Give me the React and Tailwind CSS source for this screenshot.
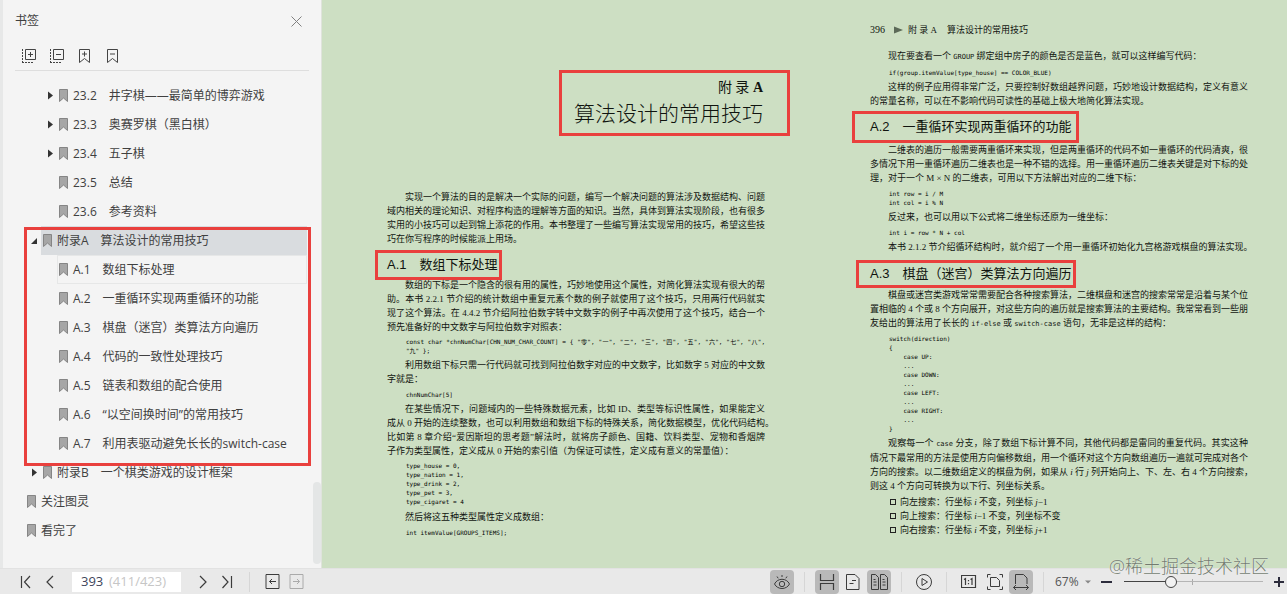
import React, { useState } from 'react';
import clsx from 'clsx';

const bookmarks = [
  { title: '23.2　井字棋——最简单的博弈游戏', depth: 2, arrow: 'closed' },
  { title: '23.3　奥赛罗棋（黑白棋）', depth: 2, arrow: 'closed' },
  { title: '23.4　五子棋', depth: 2, arrow: 'closed' },
  { title: '23.5　总结', depth: 2 },
  { title: '23.6　参考资料', depth: 2 },
  {
    title: '附录A　算法设计的常用技巧',
    depth: 1,
    arrow: 'open',
    marked: true,
    children: [
      { title: 'A.1　数组下标处理', depth: 2 },
      { title: 'A.2　一重循环实现两重循环的功能', depth: 2 },
      { title: 'A.3　棋盘（迷宫）类算法方向遍历', depth: 2 },
      { title: 'A.4　代码的一致性处理技巧', depth: 2 },
      { title: 'A.5　链表和数组的配合使用', depth: 2 },
      { title: 'A.6　“以空间换时间”的常用技巧', depth: 2 },
      { title: 'A.7　利用表驱动避免长长的switch-case', depth: 2 },
    ],
  },
  { title: '附录B　一个棋类游戏的设计框架', depth: 1, arrow: 'closed' },
  { title: '关注图灵', depth: 0 },
  { title: '看完了', depth: 0 },
];

const indents = ['pl-[10px]', 'pl-[26px]', 'pl-[42px]'];

/* ---------- icons ---------- */

const Icon = ({ w = 16, h = 16, children, className }) => (
  <svg
    width={w}
    height={h}
    viewBox={`0 0 ${w} ${h}`}
    fill="none"
    stroke="currentColor"
    className={clsx('shrink-0', className)}
    aria-hidden="true"
  >
    {children}
  </svg>
);

const BookmarkIcon = () => (
  <Icon w={9} h={13}>
    <path d="M.5 .5h8v12l-4-3.5-4 3.5z" fill="#a6a6a6" stroke="#858585" />
  </Icon>
);

const TreeArrow = ({ state }) => {
  if (!state) return <span className="w-3 shrink-0" />;
  return (
    <button type="button" aria-label="展开" className="flex w-3 shrink-0 items-center pl-px text-[#333]">
      <Icon w={8} h={9}>
        {state === 'open' ? (
          <path d="M7 2v6H1z" fill="currentColor" stroke="none" />
        ) : (
          <path d="M2 0.5l5 4-5 4z" fill="currentColor" stroke="none" />
        )}
      </Icon>
    </button>
  );
};

const ExpandAllIcon = ({ minus }) => (
  <Icon>
    <path d="M4.500 1.500h10v10h-10z" strokeLinejoin="round" />
    <path d="M7 6.500h5" />
    {!minus && <path d="M9.500 4v5" />}
    <path d="M1.500 1v13M1 14.500h11" strokeDasharray="2 1" />
  </Icon>
);

const BookmarkEditIcon = ({ minus }) => (
  <Icon>
    <path d="M2.500 1.500h10v13l-5-4-5 4z" strokeLinejoin="round" />
    <path d="M5 6h5" />
    {!minus && <path d="M7.500 3.500v5" />}
  </Icon>
);

/* ---------- sidebar ---------- */

const BookmarkRow = ({ item, selected, hovered, onSelect }) => (
  <div className={clsx('flex h-[29px] items-stretch', indents[item.depth])}>
    <TreeArrow state={item.arrow} />
    <button
      type="button"
      onClick={() => onSelect(item.title)}
      className={clsx(
        'mr-[14px] flex flex-1 items-center gap-[5px] border pl-px text-left whitespace-nowrap',
        selected ? 'border-transparent bg-[#d9dcdf]' : hovered ? 'border-[#e6e7e7]' : 'border-transparent'
      )}
    >
      <BookmarkIcon />
      {item.title}
    </button>
  </div>
);

const Sidebar = () => {
  const [selected, setSelected] = useState('附录A　算法设计的常用技巧');

  return (
    <aside className="relative w-[322px] shrink-0 border-r border-l-[3px] border-r-[#dfe3dc] border-l-[#e7e8e8] bg-[#f4f4f4] text-[#404040]">
      <header className="flex h-[42px] items-center justify-between pr-[19px] pl-3">
        <h2 className="text-xs">书签</h2>
        <button type="button" aria-label="关闭" className="text-[#808080]">
          <Icon w={11} h={11}>
            <path d="M.5 .5l10 10M10.500 .5l-10 10" />
          </Icon>
        </button>
      </header>
      <div className="mr-3 ml-3 flex h-[29px] items-center gap-3 border-b border-[#dedede] pl-[6px] text-[#444]">
        <button type="button" aria-label="全部展开"><ExpandAllIcon /></button>
        <button type="button" aria-label="全部折叠"><ExpandAllIcon minus /></button>
        <button type="button" aria-label="添加书签"><BookmarkEditIcon /></button>
        <button type="button" aria-label="删除书签"><BookmarkEditIcon minus /></button>
      </div>
      <ul className="pt-[10px] text-xs">
        {bookmarks.map(item => (
          <li key={item.title} className="relative">
            <BookmarkRow item={item} selected={selected === item.title} onSelect={setSelected} />
            {item.children && (
              <ul>
                {item.children.map((child, i) => (
                  <li key={child.title}>
                    <BookmarkRow
                      item={child}
                      selected={selected === child.title}
                      hovered={i === 0}
                      onSelect={setSelected}
                    />
                  </li>
                ))}
              </ul>
            )}
            {item.marked && (
              <div className="pointer-events-none absolute top-px right-[10px] -bottom-2 left-[21px] z-10 border-3 border-[#e9403d]" />
            )}
          </li>
        ))}
      </ul>
      <div className="absolute right-0 bottom-1 h-[82px] w-2 rounded-full bg-[#e4e6e6]" />
    </aside>
  );
};

/* ---------- document ---------- */

// Every line but the last fills the whole measure
const Para = ({ lines, full, className }) => (
  <p className={clsx('text-[9px] leading-[14px]', className)}>
    {lines.map((line, i) => (
      <span
        key={i}
        className={clsx(
          'block whitespace-nowrap',
          i === 0 && 'pl-[18px]',
          (full || i < lines.length - 1) && 'text-justify [text-align-last:justify]'
        )}
      >
        {line}
      </span>
    ))}
  </p>
);

const Code = ({ children, className }) => (
  <pre
    className={clsx(
      "pl-[19px] font-['DejaVu_Sans_Mono','Noto_Sans_CJK_SC',monospace] text-[6px] leading-[9px] text-black",
      className
    )}
  >
    {children}
  </pre>
);

const Mono = ({ children }) => (
  <span className="font-['DejaVu_Sans_Mono',monospace] text-[7px]">{children}</span>
);

const SectionTitle = ({ children, className }) => (
  <h3
    className={clsx(
      "flex items-center border-3 border-[#e9403d] font-['Liberation_Sans','Noto_Sans_CJK_SC',sans-serif] text-[13px] leading-5 whitespace-nowrap",
      className
    )}
  >
    {children}
  </h3>
);

const LeftPage = () => (
  <article className="flex min-w-0 flex-1 flex-col pt-[70px]">
    <header className="-mr-[25px] flex h-[66px] w-[231px] flex-col items-end self-end border-3 border-[#e9403d] pt-[5px] pr-6">
      <p className="text-sm leading-5">附 录 <b>A</b></p>
      <h1 className="text-[21px] leading-8 font-light whitespace-nowrap">算法设计的常用技巧</h1>
    </header>
    <Para
      className="mt-[54px]"
      lines={[
        '实现一个算法的目的是解决一个实际的问题，编写一个解决问题的算法涉及数据结构、问题',
        '域内相关的理论知识、对程序构造的理解等方面的知识。当然，具体到算法实现阶段，也有很多',
        '实用的小技巧可以起到锦上添花的作用。本书整理了一些编写算法实现常用的技巧，希望这些技',
        '巧在你写程序的时候能派上用场。',
      ]}
    />
    <SectionTitle className="mt-1 -ml-3 h-[30px] self-start pr-px pl-[9px]">A.1　数组下标处理</SectionTitle>
    <Para
      className="-mt-0.5"
      lines={[
        '数组的下标是一个隐含的很有用的属性，巧妙地使用这个属性，对简化算法实现有很大的帮',
        '助。本书 2.2.1 节介绍的统计数组中重复元素个数的例子就使用了这个技巧，只用两行代码就实',
        '现了这个算法。在 4.4.2 节介绍阿拉伯数字转中文数字的例子中再次使用了这个技巧，结合一个',
        '预先准备好的中文数字与阿拉伯数字对照表：',
      ]}
    />
    <Code className="mt-[3px]">
      <span className="block text-justify whitespace-nowrap [text-align-last:justify]">
        {'const char *chnNumChar[CHN_NUM_CHAR_COUNT] = { "零", "一", "二", "三", "四", "五", "六", "七", "八",'}
      </span>
      {'"九" };'}
    </Code>
    <Para
      className="mt-[3px]"
      lines={[
        '利用数组下标只需一行代码就可找到阿拉伯数字对应的中文数字，比如数字 5 对应的中文数',
        '字就是：',
      ]}
    />
    <Code className="mt-1">chnNumChar[5]</Code>
    <Para
      className="mt-[3px]"
      lines={[
        '在某些情况下，问题域内的一些特殊数据元素，比如 ID、类型等标识性属性，如果能定义',
        '成从 0 开始的连续整数，也可以利用数组和数组下标的特殊关系，简化数据模型，优化代码结构。',
        '比如第 8 章介绍“爱因斯坦的思考题”解法时，就将房子颜色、国籍、饮料类型、宠物和香烟牌',
        '子作为类型属性，定义成从 0 开始的索引值（为保证可读性，定义成有意义的常量值）：',
      ]}
    />
    <Code className="mt-[3px]">
      {`type_house = 0,
type_nation = 1,
type_drink = 2,
type_pet = 3,
type_cigaret = 4`}
    </Code>
    <Para className="mt-1" lines={['然后将这五种类型属性定义成数组：']} />
    <Code className="mt-1">int itemValue[GROUPS_ITEMS];</Code>
  </article>
);

const SearchItem = ({ children }) => (
  <li className="flex items-center gap-1">
    <span className="size-[6px] border border-[#222]" />
    <span>{children}</span>
  </li>
);

const RightPage = () => (
  <article className="flex min-w-0 flex-1 flex-col pt-[23px]">
    <header className="flex h-[14px] items-center text-[9px] leading-[14px]">
      <span className="text-[10px]">396</span>
      <Icon w={9} h={8} className="mr-[5px] ml-[9px]">
        <path d="M0 .5l9 3.500-9 3.500z" fill="#5c6a58" stroke="none" />
      </Icon>
      <span>附 录 A</span>
      <span className="ml-[10px]">算法设计的常用技巧</span>
    </header>
    <Para
      className="mt-3"
      lines={[<>现在要查看一个 <Mono>GROUP</Mono> 绑定组中房子的颜色是否是蓝色，就可以这样编写代码：</>]}
    />
    <Code className="mt-1">if(group.itemValue[type_house] == COLOR_BLUE)</Code>
    <Para
      className="mt-[3px]"
      lines={[
        '这样的例子应用得非常广泛，只要控制好数组越界问题，巧妙地设计数据结构，定义有意义',
        '的常量名称，可以在不影响代码可读性的基础上极大地简化算法实现。',
      ]}
    />
    <SectionTitle className="mt-[3px] -ml-[18px] h-8 self-start pr-1 pl-[15px]">A.2　一重循环实现两重循环的功能</SectionTitle>
    <Para
      lines={[
        '二维表的遍历一般需要两重循环来实现，但是两重循环的代码不如一重循环的代码清爽，很',
        '多情况下用一重循环遍历二维表也是一种不错的选择。用一重循环遍历二维表关键是对下标的处',
        '理，对于一个 M × N 的二维表，可用以下方法解出对应的二维下标：',
      ]}
    />
    <Code className="mt-1">{'int row = i / M\nint col = i % N'}</Code>
    <Para className="mt-[3px]" lines={['反过来，也可以用以下公式将二维坐标还原为一维坐标：']} />
    <Code className="mt-1">int i = row * N + col</Code>
    <Para
      full
      className="mt-[3px]"
      lines={['本书 2.1.2 节介绍循环结构时，就介绍了一个用一重循环初始化九宫格游戏棋盘的算法实现。']}
    />
    <SectionTitle className="mt-[6px] -ml-[14px] h-7 self-start pr-px pl-[11px]">A.3　棋盘（迷宫）类算法方向遍历</SectionTitle>
    <Para
      lines={[
        '棋盘或迷宫类游戏常常需要配合各种搜索算法，二维棋盘和迷宫的搜索常常是沿着与某个位',
        '置相临的 4 个或 8 个方向展开，对这些方向的遍历就是搜索算法的主要结构。我常常看到一些朋',
        <>友给出的算法用了长长的 <Mono>if-else</Mono> 或 <Mono>switch-case</Mono> 语句，无非是这样的结构：</>,
      ]}
    />
    <Code className="mt-[3px]">
      {`switch(direction)
{
    case UP:
    ...
    case DOWN:
    ...
    case LEFT:
    ...
    case RIGHT:
    ...
}`}
    </Code>
    <Para
      className="mt-[3px]"
      lines={[
        <>观察每一个 <Mono>case</Mono> 分支，除了数组下标计算不同，其他代码都是雷同的重复代码。其实这种</>,
        '情况下最常用的方法是使用方向偏移数组，用一个循环对这个方向数组遍历一遍就可完成对各个',
        <>方向的搜索。以二维数组定义的棋盘为例，如果从 <i>i</i> 行 <i>j</i> 列开始向上、下、左、右 4 个方向搜索，</>,
        '则这 4 个方向可转换为以下行、列坐标关系。',
      ]}
    />
    <ul className="mt-0.5 pl-5 text-[9px] leading-[14px]">
      <SearchItem>向左搜索：行坐标 <i>i</i> 不变，列坐标 <i>j</i>−1</SearchItem>
      <SearchItem>向上搜索：行坐标 <i>i</i>−1 不变，列坐标不变</SearchItem>
      <SearchItem>向右搜索：行坐标 <i>i</i> 不变，列坐标 <i>j</i>+1</SearchItem>
    </ul>
  </article>
);

/* ---------- status bar ---------- */

const Divider = () => <span className="h-5 w-px shrink-0 bg-[#d6d6d6]" />;

const ToolButton = ({ label, active, children }) => (
  <button
    type="button"
    aria-label={label}
    className={clsx('flex h-6 w-6 shrink-0 items-center justify-center rounded', active && 'bg-[#b9b9b9]')}
  >
    {children}
  </button>
);

const StatusBar = () => {
  const [page, setPage] = useState('393');
  const [zoom, setZoom] = useState(32);

  return (
    <footer className="flex h-[26px] shrink-0 items-center border-t border-[#e2e2e2] bg-[#e9e9e9] text-[#3c3c3c]">
      <nav className="flex items-center pl-[14px]">
        <ToolButton label="第一页">
          <Icon w={12} h={14}><path d="M1.500 1v12M10 1L4.500 7l5.500 6" strokeWidth="1.200" /></Icon>
        </ToolButton>
        <ToolButton label="上一页">
          <Icon w={12} h={14}><path d="M9 1L3 7l6 6" strokeWidth="1.200" /></Icon>
        </ToolButton>
        <label className="mx-[10px] flex h-[20px] w-[109px] items-center gap-1 bg-white pl-[9px] text-[13px]">
          <input
            aria-label="页码"
            value={page}
            onChange={e => setPage(e.target.value)}
            className="w-6 bg-transparent text-[#40455a] outline-none"
          />
          <span className="text-[#c6c6c6]">(411/423)</span>
        </label>
        <ToolButton label="下一页">
          <Icon w={12} h={14}><path d="M3 1l6 6-6 6" strokeWidth="1.200" /></Icon>
        </ToolButton>
        <ToolButton label="最后一页">
          <Icon w={12} h={14}><path d="M1.500 1L7 7l-5.500 6M10.500 1v12" strokeWidth="1.200" /></Icon>
        </ToolButton>
        <span className="w-[10px]" />
        <Divider />
        <span className="w-[10px]" />
        <ToolButton label="后退">
          <Icon w={15} h={15}>
            <path d="M1 .5h13v14H1zM11 7.500H4.500M7 5L4.500 7.500 7 10" />
          </Icon>
        </ToolButton>
        <ToolButton label="前进">
          <Icon w={15} h={15} className="text-[#aaa]">
            <path d="M1 .5h13v14H1zM4 7.500h6.500M8 5l2.500 2.500L8 10" />
          </Icon>
        </ToolButton>
      </nav>

      <div className="ml-auto flex items-center pr-[2px]">
        <ToolButton label="护眼模式" active>
          <Icon w={16} h={16}>
            <path d="M.5 10C3.500 3.700 12.500 3.700 15.500 10 12.500 16 3.500 16 .5 10z" />
            <circle cx="8" cy="10" r="2.700" />
            <path d="M8 1v2M3 2.500l1.200 1.800M13 2.500l-1.200 1.800" />
          </Icon>
        </ToolButton>
        <span className="w-[10px]" />
        <Divider />
        <span className="w-[10px]" />
        <ToolButton label="连续阅读" active>
          <Icon w={16} h={16}>
            <path d="M1.500 0v6.500h13V0M1.500 16v-6.500h13V16" strokeWidth="1.200" />
          </Icon>
        </ToolButton>
        <span className="w-[2px]" />
        <ToolButton label="单页">
          <Icon w={14} h={16}>
            <path d="M.5 .5h8.500l4 4v11H.5zM6 6.500h4M3.500 9.500h4" strokeLinejoin="round" />
          </Icon>
        </ToolButton>
        <span className="w-[2px]" />
        <ToolButton label="双页" active>
          <Icon w={17} h={16}>
            <path d="M.5 .5h4l3 3v12h-7zM9.500 .5h4l3 3v12h-7zM2.500 5.500h2M2.500 8h3M2.500 11h3M11.500 5.500h2M11.500 8h3M11.500 11h3" />
          </Icon>
        </ToolButton>
        <span className="w-[10px]" />
        <Divider />
        <span className="w-[10px]" />
        <ToolButton label="播放">
          <Icon w={16} h={16}>
            <circle cx="8" cy="8" r="7.500" />
            <path d="M6 4.500v7L11.500 8z" strokeLinejoin="round" />
          </Icon>
        </ToolButton>
        <span className="w-[10px]" />
        <Divider />
        <span className="w-[10px]" />
        <ToolButton label="实际大小">
          <Icon w={16} h={14}>
            <path d="M.5 .5h14v12H.5zM3 4.500l1.500-1v6.500M9.500 4.500l1.500-1v6.500M7.500 5v1.200M7.500 8v1.200" strokeWidth="1.200" />
          </Icon>
        </ToolButton>
        <span className="w-[2px]" />
        <ToolButton label="适合页面">
          <Icon w={16} h={16}>
            <path d="M3.500 3.500h6l3 3v6h-9zM.5 3.500v-3h3M12.500 .5h3v3M15.500 12.500v3h-3M3.500 15.500h-3v-3" />
          </Icon>
        </ToolButton>
        <span className="w-[2px]" />
        <ToolButton label="适合宽度" active>
          <Icon w={16} h={16}>
            <path d="M2.500 10V.5h8l3.500 3.500v6M.5 13.500h15M3 11L.5 13.500 3 16M13 11l2.500 2.500L13 16" />
          </Icon>
        </ToolButton>
        <span className="w-[10px]" />
        <Divider />
        <label className="relative ml-[11px] flex items-center">
          <select
            aria-label="缩放"
            className="w-9 appearance-none bg-transparent text-xs text-[#555] outline-none"
          >
            <option>67%</option>
            <option>100%</option>
          </select>
          <Icon w={6} h={4} className="pointer-events-none absolute right-0 text-[#888]">
            <path d="M0 .5h6l-3 3z" fill="currentColor" stroke="none" />
          </Icon>
        </label>
        <button type="button" aria-label="缩小" className="ml-[10px] text-[#2c2c3c]">
          <Icon w={12} h={12}><path d="M0 6h11" strokeWidth="2" /></Icon>
        </button>
        <div className="relative mr-[10px] ml-[11px] flex items-center">
          <span className="absolute top-0 left-[68px] h-full w-px bg-[#aaa]" />
          <input
            type="range"
            aria-label="缩放比例"
            value={zoom}
            onChange={e => setZoom(Number(e.target.value))}
            className="relative h-[6px] w-[139px] appearance-none bg-[linear-gradient(to_right,#444_33%,#b5b5b5_33%)] bg-[length:100%_1px] bg-center bg-no-repeat [&::-webkit-slider-thumb]:size-3 [&::-webkit-slider-thumb]:appearance-none [&::-webkit-slider-thumb]:rounded-full [&::-webkit-slider-thumb]:border [&::-webkit-slider-thumb]:border-[#444] [&::-webkit-slider-thumb]:bg-[#f2f2f2]"
          />
        </div>
        <button type="button" aria-label="放大" className="text-[#2c2c3c]">
          <Icon w={12} h={12}><path d="M1 6h10M6 1v10" strokeWidth="2" /></Icon>
        </button>
      </div>
    </footer>
  );
};

const App = () => {
  return (
    <div className="relative flex min-h-screen flex-col font-['Open_Sans','Noto_Sans_CJK_SC',sans-serif]" lang="zh-CN">
      <div className="flex flex-1">
        <Sidebar />
        <main className="flex min-w-0 flex-1 gap-[105px] bg-[#cddfc3] pr-[39px] pl-[65px] font-['Liberation_Serif','Noto_Sans_CJK_SC',serif] text-[#10140f]">
          <LeftPage />
          <RightPage />
        </main>
      </div>
      <StatusBar />
      <div className="pointer-events-none absolute right-[18px] bottom-4 text-lg leading-6 font-light text-[#737c70] [text-shadow:0_0_1px_#fff]">
        @稀土掘金技术社区
      </div>
    </div>
  );
};

export default App;
